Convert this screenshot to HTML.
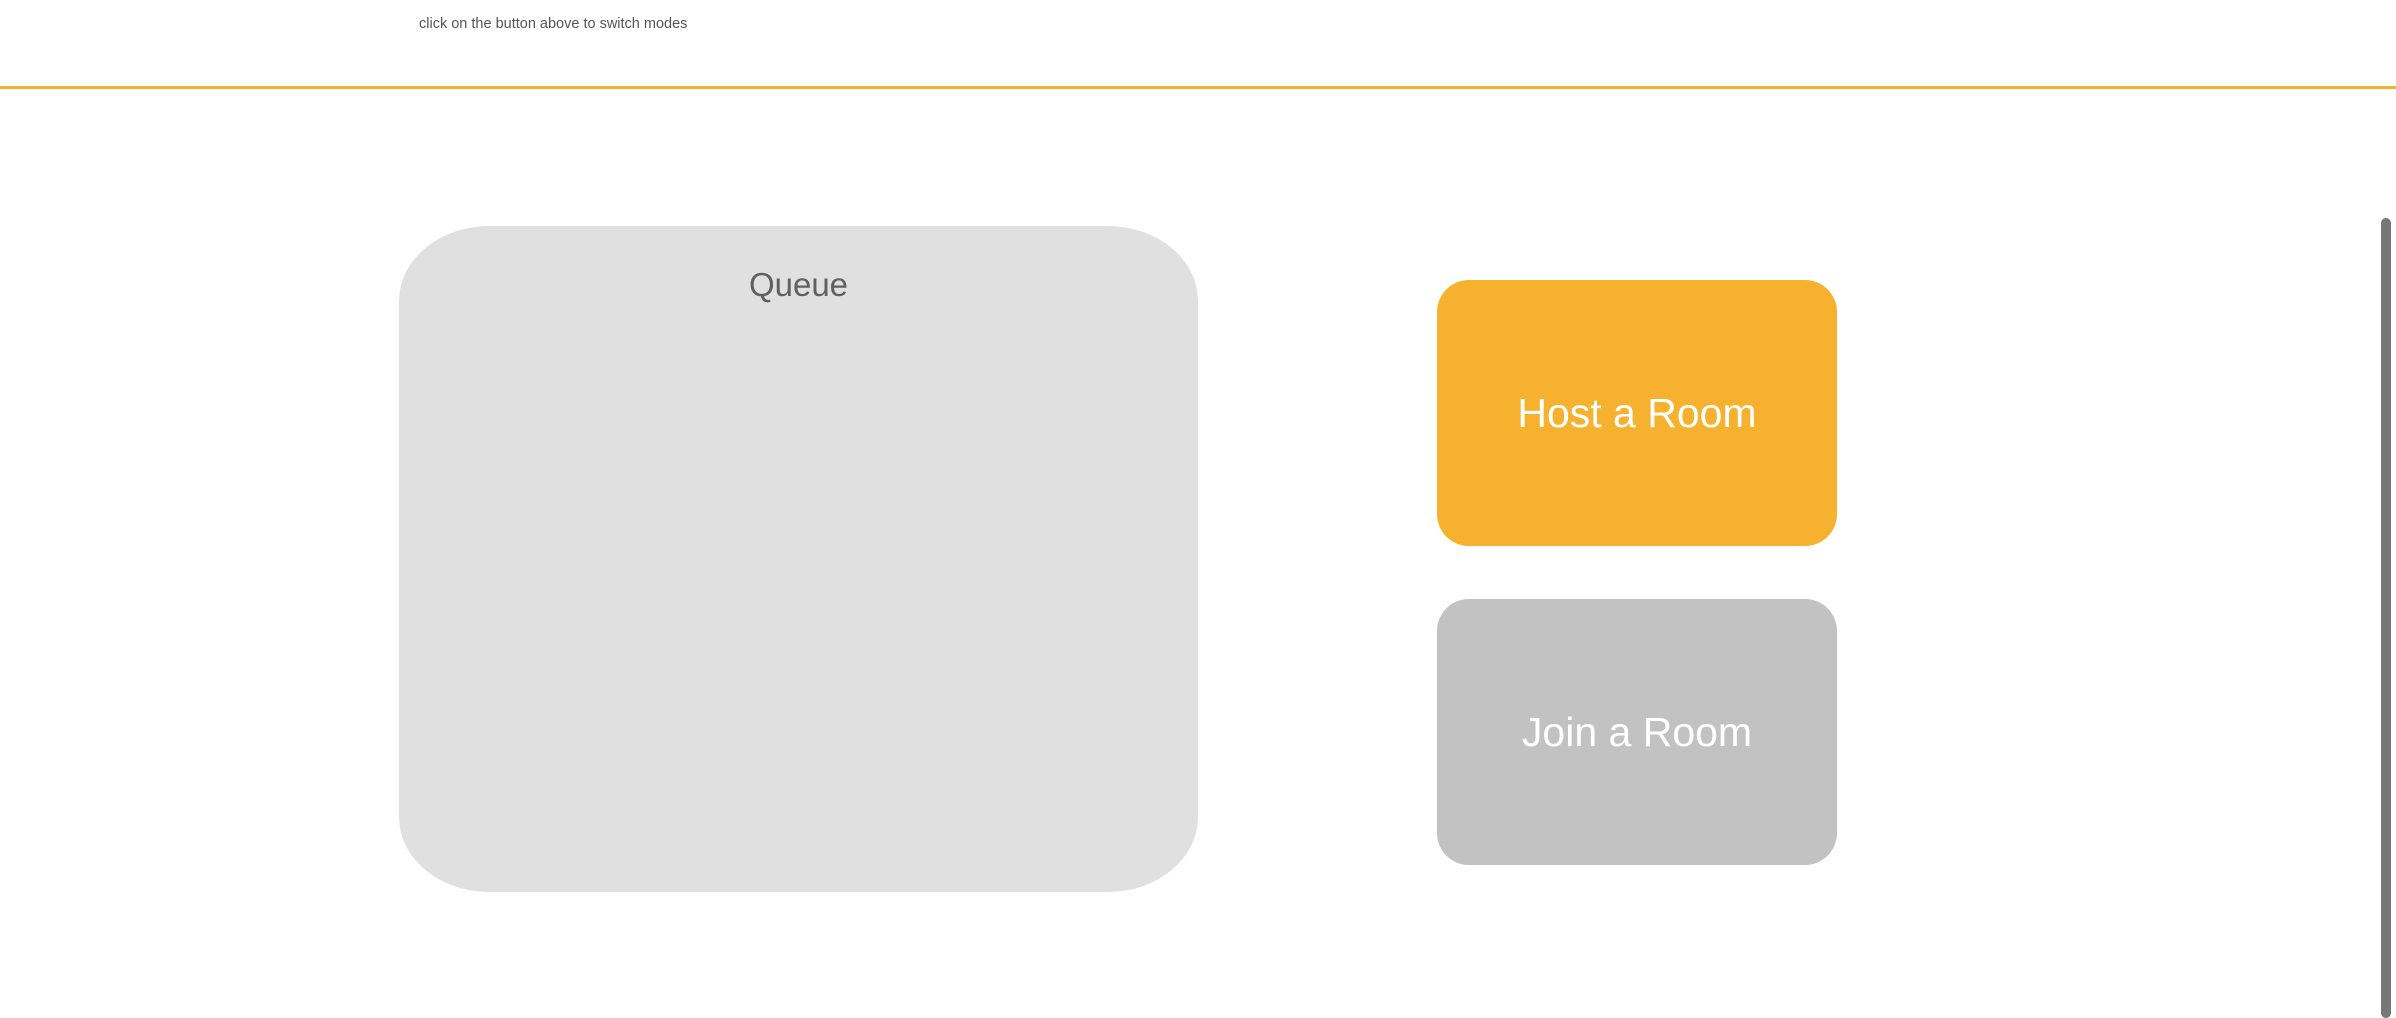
<!DOCTYPE html>
<html><head><meta charset="utf-8"><style>
html,body{margin:0;padding:0;width:2396px;height:1009px;overflow:hidden;background:#fff;font-family:"Liberation Sans",sans-serif;}
.hint{position:absolute;left:419px;top:16px;font-size:14.5px;color:#555;letter-spacing:0;}
.line{position:absolute;left:0;top:86px;width:2396px;height:3px;background:#f6b22e;}
.queue{position:absolute;left:399px;top:226px;width:799px;height:666px;background:#e0e0e0;border-radius:90px/75px;}
.queue .t{position:absolute;top:40px;width:100%;text-align:center;font-size:33px;color:#606060;}
.btn{position:absolute;left:1437px;width:400px;height:266px;border-radius:32px;color:#fff;font-size:41px;display:flex;align-items:center;justify-content:center;letter-spacing:0;}
.host{top:280px;background:#f6b22e;}
.join{top:599px;background:#c2c2c2;}
.sb{position:absolute;left:2381px;top:218px;width:10px;height:800px;background:#777;border-radius:5px;}
</style></head><body>
<div class="hint">click on the button above to switch modes</div>
<div class="line"></div>
<div class="queue"><div class="t">Queue</div></div>
<div class="btn host">Host a Room</div>
<div class="btn join">Join a Room</div>
<div class="sb"></div>
</body></html>
